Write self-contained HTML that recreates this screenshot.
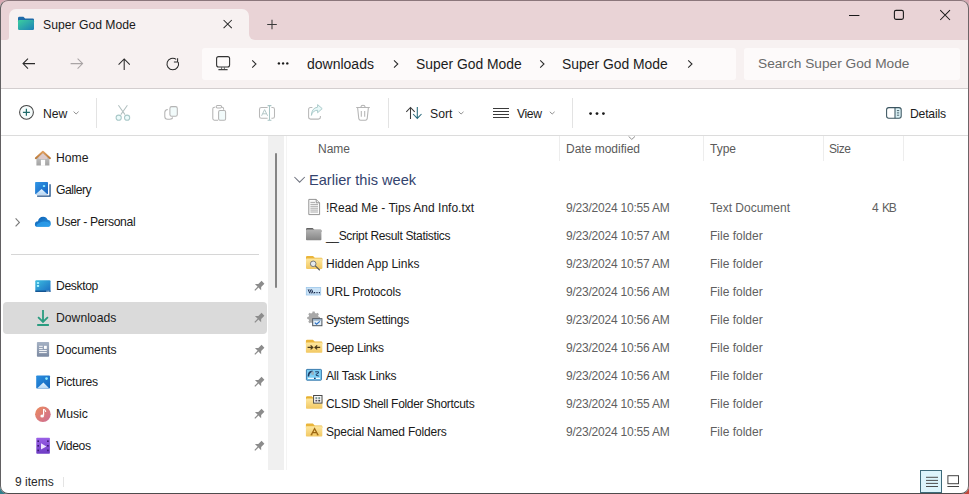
<!DOCTYPE html>
<html><head><meta charset="utf-8">
<style>
*{margin:0;padding:0;box-sizing:border-box}
html,body{width:969px;height:494px;overflow:hidden;background:#d8a9b3}
body{font-family:"Liberation Sans",sans-serif;color:#1c1c1c;position:relative}
.a{position:absolute}
.t{position:absolute;white-space:nowrap;line-height:16px}
#win{position:absolute;left:0;top:0;width:969px;height:494px;border-radius:8px;overflow:hidden;background:#fff}
#frame{position:absolute;left:0;top:0;width:969px;height:494px;border:1px solid #5e585b;border-top-color:#8b767b;border-left-color:#626062;border-bottom-color:#4e4c4d;border-right-color:#6e6467;border-radius:8px}
#ov{position:absolute;left:0;top:0}
.cm{font-size:12.2px;color:#1c1c1c}
.nav{font-size:12.2px;color:#1a1a1a}
.hd{font-size:12px;color:#5a5a5a}
.st{font-size:12px;color:#2a2a2a}
.rw{font-size:12px;color:#1a1a1a}
.rw.g{color:#5f5f5f}
.dt{letter-spacing:-0.22px}
</style></head><body>
<div class="a" style="left:0;top:430px;width:70px;height:64px;background:#2f7f8c"></div>
<div class="a" style="left:900px;top:430px;width:69px;height:64px;background:#c2483a"></div>
<div id="win">
 <!-- backgrounds -->
 <div class="a" style="left:0;top:0;width:969px;height:40px;background:#e9d3d6"></div>
 <div class="a" style="left:0;top:40px;width:969px;height:48px;background:#f7f1f1"></div>
 <div class="a" style="left:0;top:88px;width:969px;height:1px;background:#d3cecf"></div>
 <div class="a" style="left:9px;top:9px;width:240px;height:32px;background:#f7f1f1;border-radius:7px 7px 0 0"></div>
 <div class="a" style="left:249px;top:30px;width:8px;height:10px;background:#f7f1f1"></div>
 <div class="a" style="left:249px;top:24px;width:10px;height:16px;background:#e9d3d6;border-radius:0 0 0 6px"></div>
 <div class="a" style="left:2px;top:30px;width:7px;height:10px;background:#f7f1f1"></div>
 <div class="a" style="left:0;top:24px;width:9px;height:16px;background:#e9d3d6;border-radius:0 0 3px 0"></div>
 <div class="a" style="left:202px;top:48px;width:534px;height:32px;background:#fdfafa;border-radius:3px"></div>
 <div class="a" style="left:744px;top:48px;width:216px;height:32px;background:#fdfafa;border-radius:3px"></div>
 <div class="a" style="left:0;top:135px;width:969px;height:1px;background:#dcdcdc"></div>
 <div class="a" style="left:268px;top:136px;width:16px;height:334px;background:#f0f0f0"></div>
 <div class="a" style="left:275px;top:153px;width:2px;height:135px;background:#858585;border-radius:1px"></div>
 <div class="a" style="left:286px;top:136px;width:1px;height:334px;background:#f4f4f4"></div>
 <div class="a" style="left:3px;top:302px;width:264px;height:32px;background:#dadada;border-radius:4px"></div>
 <div class="a" style="left:11px;top:254px;width:248px;height:1px;background:#d6d6d6"></div>
 <div class="a" style="left:96px;top:98px;width:1px;height:30px;background:#e3e3e3"></div>
 <div class="a" style="left:388px;top:98px;width:1px;height:30px;background:#e3e3e3"></div>
 <div class="a" style="left:572px;top:98px;width:1px;height:30px;background:#e3e3e3"></div>
 <div class="a" style="left:559px;top:136px;width:1px;height:25px;background:#ededed"></div>
 <div class="a" style="left:703px;top:136px;width:1px;height:25px;background:#ededed"></div>
 <div class="a" style="left:823px;top:136px;width:1px;height:25px;background:#ededed"></div>
 <div class="a" style="left:903px;top:136px;width:1px;height:25px;background:#ededed"></div>
 <div class="a" style="left:63px;top:477px;width:1px;height:10px;background:#e4e4e4"></div>
 <div class="a" style="left:920px;top:470px;width:22px;height:23px;background:#dcf4fb;border:1px solid #3d6a7a"></div>

 <!-- texts -->
 <div class="t" style="left:43px;top:17px;font-size:12.2px;color:#1a1a1a">Super God Mode</div>
 <div class="t" style="left:307px;top:56px;font-size:14px">downloads</div>
 <div class="t" style="left:416px;top:56px;font-size:13.9px">Super God Mode</div>
 <div class="t" style="left:562px;top:56px;font-size:13.9px">Super God Mode</div>
 <div class="t" style="left:758px;top:56px;font-size:13.7px;color:#6a6a6a">Search Super God Mode</div>
 <div class="t cm" style="left:43px;top:106px">New</div>
 <div class="t cm" style="left:430px;top:106px">Sort</div>
 <div class="t cm" style="left:517px;top:106px;letter-spacing:-0.4px">View</div>
 <div class="t cm" style="left:910px;top:106px;letter-spacing:-0.2px">Details</div>
 <div class="t nav" style="left:56px;top:150px">Home</div>
 <div class="t nav" style="left:56px;top:182px;letter-spacing:-0.5px">Gallery</div>
 <div class="t nav" style="left:56px;top:214px;letter-spacing:-0.36px">User - Personal</div>
 <div class="t nav" style="left:56px;top:278px;letter-spacing:-0.4px">Desktop</div>
 <div class="t nav" style="left:56px;top:310px">Downloads</div>
 <div class="t nav" style="left:56px;top:342px;letter-spacing:-0.12px">Documents</div>
 <div class="t nav" style="left:56px;top:374px;letter-spacing:-0.29px">Pictures</div>
 <div class="t nav" style="left:56px;top:406px">Music</div>
 <div class="t nav" style="left:56px;top:438px;letter-spacing:-0.4px">Videos</div>
 <div class="t hd" style="left:318px;top:141px">Name</div>
 <div class="t hd" style="left:566px;top:141px">Date modified</div>
 <div class="t hd" style="left:710px;top:141px">Type</div>
 <div class="t hd" style="left:829px;top:141px;letter-spacing:-0.5px">Size</div>
 <div class="t" style="left:309px;top:172px;font-size:14.6px;color:#34446e">Earlier this week</div>

 <div class="t rw" style="left:326px;top:200px">!Read Me - Tips And Info.txt</div>
 <div class="t rw g dt" style="left:566px;top:200px">9/23/2024 10:55 AM</div>
 <div class="t rw g" style="left:710px;top:200px">Text Document</div>
 <div class="t rw g" style="left:872px;top:200px">4</div><div class="t rw g" style="left:882px;top:200px;letter-spacing:-1.3px;font-size:12px">KB</div>
 <div class="t rw" style="left:326px;top:228px;letter-spacing:-0.33px">__Script Result Statistics</div>
 <div class="t rw g dt" style="left:566px;top:228px">9/23/2024 10:57 AM</div>
 <div class="t rw g" style="left:710px;top:228px">File folder</div>
 <div class="t rw" style="left:326px;top:256px">Hidden App Links</div>
 <div class="t rw g dt" style="left:566px;top:256px">9/23/2024 10:57 AM</div>
 <div class="t rw g" style="left:710px;top:256px">File folder</div>
 <div class="t rw" style="left:326px;top:284px;letter-spacing:-0.17px">URL Protocols</div>
 <div class="t rw g dt" style="left:566px;top:284px">9/23/2024 10:56 AM</div>
 <div class="t rw g" style="left:710px;top:284px">File folder</div>
 <div class="t rw" style="left:326px;top:312px;letter-spacing:-0.25px">System Settings</div>
 <div class="t rw g dt" style="left:566px;top:312px">9/23/2024 10:56 AM</div>
 <div class="t rw g" style="left:710px;top:312px">File folder</div>
 <div class="t rw" style="left:326px;top:340px;letter-spacing:-0.22px">Deep Links</div>
 <div class="t rw g dt" style="left:566px;top:340px">9/23/2024 10:56 AM</div>
 <div class="t rw g" style="left:710px;top:340px">File folder</div>
 <div class="t rw" style="left:326px;top:368px;letter-spacing:-0.15px">All Task Links</div>
 <div class="t rw g dt" style="left:566px;top:368px">9/23/2024 10:56 AM</div>
 <div class="t rw g" style="left:710px;top:368px">File folder</div>
 <div class="t rw" style="left:326px;top:396px;letter-spacing:-0.3px">CLSID Shell Folder Shortcuts</div>
 <div class="t rw g dt" style="left:566px;top:396px">9/23/2024 10:55 AM</div>
 <div class="t rw g" style="left:710px;top:396px">File folder</div>
 <div class="t rw" style="left:326px;top:424px;letter-spacing:-0.2px">Special Named Folders</div>
 <div class="t rw g dt" style="left:566px;top:424px">9/23/2024 10:55 AM</div>
 <div class="t rw g" style="left:710px;top:424px">File folder</div>
 <div class="t st" style="left:15px;top:474px">9 items</div>

 <!-- icons overlay -->
 <svg id="ov" width="969" height="494" viewBox="0 0 969 494">
  <defs>
  <linearGradient id="tf" x1="0" y1="0" x2="1" y2="1"><stop offset="0" stop-color="#3ccf9e"/><stop offset="1" stop-color="#1d80b8"/></linearGradient>
 </defs>
 <g fill="none" stroke-linecap="butt">
 <!-- tab folder -->
 <path d="M18 18.2 Q18 16.8 19.4 16.8 H23.4 L25.2 18.4 H32.8 Q34 18.4 34 19.6 V21 H18 Z" fill="#1f6aa8"/>
 <rect x="18" y="20" width="16" height="10" rx="1.2" fill="url(#tf)"/>
 <!-- tab close & plus -->
 <path d="M223.6 20 L231.8 28.2 M231.8 20 L223.6 28.2" stroke="#2a2a2a" stroke-width="1.05"/>
 <path d="M272 19.8 V29.3 M267.2 24.5 H276.8" stroke="#3a3a3a" stroke-width="1.05"/>
 <!-- window controls -->
 <path d="M849 15.5 H859.4" stroke="#1a1a1a" stroke-width="1.05"/>
 <rect x="894.4" y="10.4" width="9" height="9" rx="1.6" stroke="#1a1a1a" stroke-width="1.1"/>
 <path d="M940.2 10.2 L950 20 M950 10.2 L940.2 20" stroke="#1a1a1a" stroke-width="1.05"/>
 <!-- nav arrows -->
 <path d="M35 63.6 H23 M28 58.6 L23 63.6 L28 68.6" stroke="#2a2a2a" stroke-width="1.05"/>
 <path d="M70.6 63.6 H82.6 M77.6 58.6 L82.6 63.6 L77.6 68.6" stroke="#a9a4a5" stroke-width="1.05"/>
 <path d="M124.2 70 V59 M118.6 64.6 L124.2 59 L129.8 64.6" stroke="#2a2a2a" stroke-width="1.05"/>
 <path d="M176.2 59.3 A5.8 5.8 0 1 0 178.3 62.2" stroke="#2a2a2a" stroke-width="1.05"/>
 <path d="M177.6 58.2 V62 H173.9" stroke="#2a2a2a" stroke-width="1.05"/>
 <!-- PC -->
 <rect x="216.6" y="56.6" width="13" height="10.4" rx="2" stroke="#333" stroke-width="1.1"/>
 <path d="M218.4 69.6 H227.6" stroke="#444" stroke-width="1.3"/><path d="M221.6 67.2 V69 M224.4 67.2 V69" stroke="#555" stroke-width="0.9"/>
 <!-- breadcrumbs chevrons -->
 <path d="M252.2 60.4 L256 64 L252.2 67.6" stroke="#2a2a2a" stroke-width="1.05"/>
 <circle cx="278.9" cy="63.4" r="1.2" fill="#1a1a1a"/><circle cx="283.1" cy="63.4" r="1.2" fill="#1a1a1a"/><circle cx="287.3" cy="63.4" r="1.2" fill="#1a1a1a"/>
 <path d="M394 60.4 L397.8 64 L394 67.6" stroke="#2a2a2a" stroke-width="1.05"/>
 <path d="M540.2 60.4 L544 64 L540.2 67.6" stroke="#2a2a2a" stroke-width="1.05"/>
 <path d="M688.2 60.4 L692 64 L688.2 67.6" stroke="#2a2a2a" stroke-width="1.05"/>
 <!-- command bar -->
 <circle cx="26.5" cy="112.3" r="6.9" fill="#f6fcfc" stroke="#444" stroke-width="1.05"/>
 <path d="M26.4 108.8 V115.8 M22.9 112.3 H29.9" stroke="#1f6b6a" stroke-width="1.25"/>
 <path d="M73.6 111.6 L76.1 114 L78.6 111.6" stroke="#8a8a8a" stroke-width="0.95"/>
 <!-- cut -->
 <path d="M118.4 105.2 L125 114.6 M127.4 105.2 L120.8 114.6" stroke="#b2c0c0" stroke-width="1.05"/>
 <circle cx="118.7" cy="117.7" r="2.6" fill="#ecfbfb" stroke="#a9c8c8" stroke-width="1.05"/>
 <circle cx="127.1" cy="117.7" r="2.6" fill="#ecfbfb" stroke="#a9c8c8" stroke-width="1.05"/>
 <!-- copy -->
 <rect x="169.9" y="106.6" width="7.4" height="9.6" rx="1.8" fill="#f2fbfb" stroke="#b4b4b4" stroke-width="1.05"/>
 <path d="M167.8 109.4 Q164.8 109.6 164.8 112.4 V116.4 Q164.8 119.2 167.6 119.2 H169.8 Q172.4 119.2 172.6 117.4" stroke="#b4b4b4" stroke-width="1.05"/>
 <!-- paste -->
 <path d="M215.2 107.2 H214.4 Q212.8 107.2 212.8 108.8 V118.6 Q212.8 120.2 214.4 120.2 H218" stroke="#b4b4b4" stroke-width="1.05"/>
 <path d="M221.8 107.2 H222 Q223.6 107.2 223.6 108.8 V109.8" stroke="#b4b4b4" stroke-width="1.05"/>
 <rect x="216.2" y="105.4" width="5.4" height="2.6" rx="1.2" stroke="#b4b4b4" stroke-width="1.05"/>
 <rect x="218.6" y="110.5" width="7" height="9.7" rx="1.4" fill="#f2fbfb" stroke="#b4b4b4" stroke-width="1.05"/>
 <!-- rename -->
 <path d="M267.6 107.4 H261.4 Q259.5 107.4 259.5 109.3 V116.4 Q259.5 118.3 261.4 118.3 H267.6 M271.4 107.4 H272.6 Q274.5 107.4 274.5 109.3 V116.4 Q274.5 118.3 272.6 118.3 H271.4" stroke="#b8b8b8" stroke-width="1.05"/>
 <path d="M269.5 105.6 V120.2 M267.6 105.6 H271.4 M267.6 120.2 H271.4" stroke="#a7c4c4" stroke-width="1.05"/>
 <path d="M261.6 115.8 L264.6 109.6 L267.6 115.8 M262.6 113.8 H266.6" stroke="#b5c8c8" stroke-width="1"/>
 <!-- share -->
 <path d="M312.4 107.4 H310.6 Q308.6 107.4 308.6 109.4 V117.1 Q308.6 119.1 310.6 119.1 H318.4 Q320.4 119.1 320.4 117.1 V116" stroke="#b8b8b8" stroke-width="1.05"/>
 <path d="M311.4 115.4 Q312.4 110.6 317.6 110.2 V112.8 L322.2 108.6 L317.6 104.6 V107.2 Q311.6 108 311.4 115.4 Z" fill="#e8f8f8" stroke="#a8c8c8" stroke-width="0.95" stroke-linejoin="round"/>
 <!-- delete -->
 <path d="M356.2 107.4 H369.8 M360.8 107.2 Q361 105.2 363 105.2 Q365 105.2 365.2 107.2 M357.6 107.6 L358.8 118.6 Q359 120.2 360.6 120.2 H365.4 Q367 120.2 367.2 118.6 L368.4 107.6 M361.3 111 V116.8 M364.7 111 V116.8" stroke="#b5b5b5" stroke-width="1.05"/>
 <!-- sort -->
 <path d="M410.5 118.9 V107.4 M406.3 111.8 L410.5 107.4 L414.7 111.8" stroke="#3c3c3c" stroke-width="1.05"/>
 <path d="M417.3 106.9 V118.4 M413.1 114 L417.3 118.4 L421.5 114" stroke="#2a6b7c" stroke-width="1.05"/>
 <path d="M458.7 111.8 L461.1 114 L463.5 111.8" stroke="#8a8a8a" stroke-width="0.95"/>
 <!-- view -->
 <path d="M493 108.5 H509 M493 111.5 H509 M493 114.5 H509 M493 117.5 H509" stroke="#3a3a3a" stroke-width="1.05"/>
 <path d="M549.8 111.8 L552.2 114 L554.6 111.8" stroke="#8a8a8a" stroke-width="0.95"/>
 <circle cx="590.6" cy="113.6" r="1.4" fill="#1a1a1a"/><circle cx="597" cy="113.6" r="1.4" fill="#1a1a1a"/><circle cx="603.4" cy="113.6" r="1.4" fill="#1a1a1a"/>
 <!-- details -->
 <path d="M895 107.6 H899.4 Q901.2 107.6 901.2 109.4 V116.4 Q901.2 118.2 899.4 118.2 H895 Z" fill="#dcf2f6"/>
 <rect x="886.6" y="107.6" width="14.6" height="10.6" rx="2.2" stroke="#3b5560" stroke-width="1.05"/>
 <path d="M895 107.6 V118.2" stroke="#3b5560" stroke-width="1.05"/>
 <path d="M896.9 110.6 H899.2 M896.9 112.9 H899.2 M896.9 115.2 H899.2" stroke="#3b5560" stroke-width="0.9"/>
 </g>
 <defs>
  <linearGradient id="hb" x1="0" y1="0" x2="0" y2="1"><stop offset="0" stop-color="#cfcfcf"/><stop offset="1" stop-color="#a2a2a2"/></linearGradient>
  <linearGradient id="hr" x1="0" y1="0" x2="0" y2="1"><stop offset="0" stop-color="#e0a060"/><stop offset="1" stop-color="#b87838"/></linearGradient>
  <linearGradient id="gl" x1="0" y1="0" x2="1" y2="1"><stop offset="0" stop-color="#2f96e6"/><stop offset="1" stop-color="#1762c0"/></linearGradient>
  <linearGradient id="gw" x1="0" y1="0" x2="0" y2="1"><stop offset="0" stop-color="#e8f4ff"/><stop offset="1" stop-color="#b8d8f4"/></linearGradient>
  <linearGradient id="od" x1="0" y1="0" x2="1" y2="1"><stop offset="0" stop-color="#0c5cb0"/><stop offset="1" stop-color="#2a9ae6"/></linearGradient>
  <linearGradient id="dk" x1="0" y1="0" x2="1" y2="1"><stop offset="0" stop-color="#3cbde0"/><stop offset="1" stop-color="#1a6cc2"/></linearGradient>
  <linearGradient id="dc" x1="0" y1="0" x2="0" y2="1"><stop offset="0" stop-color="#a6b2c4"/><stop offset="1" stop-color="#7c8aa2"/></linearGradient>
  <linearGradient id="pc" x1="0" y1="0" x2="1" y2="1"><stop offset="0" stop-color="#2a8fe0"/><stop offset="1" stop-color="#1464bc"/></linearGradient>
  <linearGradient id="mu" x1="0" y1="0" x2="1" y2="1"><stop offset="0" stop-color="#ec8c5c"/><stop offset="1" stop-color="#cc6c96"/></linearGradient>
  <linearGradient id="vd" x1="0" y1="0" x2="0" y2="1"><stop offset="0" stop-color="#9a60e6"/><stop offset="1" stop-color="#6e3cc4"/></linearGradient>
  <g id="pin"><g transform="rotate(45)"><path d="M-2 -6.2 H2 V-1.6 L4.4 0.8 H-4.4 L-2 -1.6 Z" fill="#8c8c8c"/><path d="M0 0.6 V5.4" stroke="#8c8c8c" stroke-width="1.2"/></g></g>
 </defs>
 <!-- home -->
 <path d="M36.4 158.8 L42.9 152.6 L49.4 158.8 V165.6 H36.4 Z" fill="url(#hb)"/>
 <path d="M38.6 156.8 L42.9 152.8 L47.2 156.8 V159 H38.6 Z" fill="#dccaca"/>
 <rect x="40.9" y="159.8" width="4.2" height="6" fill="#fff"/>
 <path d="M35.8 158.2 L42.9 151.8 L50 158.2" fill="none" stroke="url(#hr)" stroke-width="1.9" stroke-linecap="round" stroke-linejoin="round"/>
 <!-- gallery -->
 <path d="M37.1 195.4 H49.4 V184.2 H50.7 V196.7 H37.1 Z" fill="#1f4f86"/>
 <rect x="35.1" y="182" width="12.9" height="12.3" rx="0.8" fill="url(#gl)"/>
 <path d="M35.6 194.3 L41.6 189 L47.4 194.3 Z" fill="url(#gw)"/>
 <rect x="42.9" y="185.1" width="2.2" height="1.9" fill="#86e6ff"/>
 <!-- onedrive -->
 <path d="M37.6 226.8 Q34.8 226.8 34.9 224.2 Q35 221.4 38 221.2 Q38.8 216.8 43.2 216.7 Q46.4 216.8 47.6 219.8 Q50.8 220.2 50.8 223.4 Q50.8 226.8 47.6 226.8 Z" fill="url(#od)"/>
 <path d="M38.2 226.8 Q36.4 226.6 36.6 225 Q40 221.2 44.6 221.4 Q48.4 221.6 50.6 224.4 Q50.2 226.8 47.6 226.8 Z" fill="#2ea0ec" opacity="0.75"/>
 <path d="M15.6 218.4 L19.4 222.4 L15.6 226.4" fill="none" stroke="#7a7a7a" stroke-width="1.15"/>
 <!-- desktop -->
 <rect x="35.3" y="280.3" width="15.2" height="11.6" rx="1" fill="url(#dk)"/>
 <rect x="35.3" y="290.6" width="15.2" height="1.3" fill="#15508c"/>
 <rect x="46.6" y="290.6" width="0.9" height="1.3" fill="#e6f4fb"/><rect x="48.4" y="290.6" width="0.9" height="1.3" fill="#e6f4fb"/>
 <rect x="36.9" y="282.1" width="2.2" height="1.8" fill="#a8f4ff"/><rect x="36.9" y="285" width="2.2" height="1.9" fill="#a8f4ff"/>
 <!-- downloads -->
 <path d="M43 310 V322 M38.1 317.1 L43 322 L47.9 317.1" fill="none" stroke="#2a9c80" stroke-width="1.8"/>
 <path d="M37.2 325 H48.9" stroke="#2a9c80" stroke-width="1.8"/>
 <!-- documents -->
 <rect x="36.9" y="342" width="12.2" height="14.7" rx="0.8" fill="url(#dc)"/>
 <path d="M39.1 346.3 H42.7 M39.1 348.6 H42.7 M39.1 350.6 H46.8 M39.1 352.6 H46.8" stroke="#fff" stroke-width="0.95"/>
 <rect x="44" y="345.8" width="2.8" height="3.1" fill="#fff"/>
 <!-- pictures -->
 <rect x="36.2" y="375.5" width="13.8" height="13.1" rx="0.8" fill="url(#pc)"/>
 <path d="M37.2 388.2 L43.4 382.4 L49.1 388.2 Z" fill="url(#gw)"/>
 <circle cx="46.5" cy="378.6" r="1.3" fill="#8ff0ff"/>
 <!-- music -->
 <circle cx="42.9" cy="414.3" r="7.8" fill="url(#mu)"/>
 <path d="M43.6 409 V415.4" stroke="#fff" stroke-width="1.2"/>
 <path d="M43.6 409.2 Q45.6 409.8 45.8 412" fill="none" stroke="#fff" stroke-width="1.1"/>
 <ellipse cx="42.2" cy="416.1" rx="1.8" ry="1.5" fill="#fff"/>
 <!-- videos -->
 <rect x="36.3" y="437.8" width="13.6" height="15.9" rx="0.8" fill="url(#vd)"/>
 <rect x="37.4" y="440.4" width="1.6" height="1.6" fill="#3a1a6e"/><rect x="37.4" y="445" width="1.6" height="1.6" fill="#3a1a6e"/><rect x="37.4" y="449.6" width="1.6" height="1.6" fill="#3a1a6e"/>
 <rect x="47.1" y="440.4" width="1.6" height="1.6" fill="#3a1a6e"/><rect x="47.1" y="445" width="1.6" height="1.6" fill="#3a1a6e"/><rect x="47.1" y="449.6" width="1.6" height="1.6" fill="#3a1a6e"/>
 <path d="M41 443.2 L46.4 446.4 L41 449.6 Z" fill="#efe4ff"/>
 <!-- pins -->
 <use href="#pin" x="258.6" y="286.6"/>
 <use href="#pin" x="258.6" y="318.6"/>
 <use href="#pin" x="258.6" y="350.6"/>
 <use href="#pin" x="258.6" y="382.6"/>
 <use href="#pin" x="258.6" y="414.6"/>
 <use href="#pin" x="258.6" y="446.6"/>
 <defs>
  <linearGradient id="gf" x1="0" y1="0" x2="0" y2="1"><stop offset="0" stop-color="#b4b4b4"/><stop offset="1" stop-color="#858585"/></linearGradient>
  <linearGradient id="yf" x1="0" y1="0" x2="0" y2="1"><stop offset="0" stop-color="#fde7a0"/><stop offset="1" stop-color="#f2c862"/></linearGradient>
  <g id="yfold"><path d="M0 1.2 Q0 0 1.2 0 H7 L8.8 1.8 H15.4 Q16.4 1.8 16.4 2.8 V4.5 H0 Z" fill="#eab53a"/><rect x="0" y="2.6" width="16.4" height="10.4" rx="0.8" fill="url(#yf)"/></g>
 </defs>
 <!-- txt -->
 <path d="M308.8 199.4 H316.2 L319.6 202.8 V214.6 H308.8 Z" fill="#fcfcfc" stroke="#8e8e8e" stroke-width="0.95"/>
 <path d="M316.2 199.4 V202.8 H319.6" fill="#ececec" stroke="#8e8e8e" stroke-width="0.95"/>
 <path d="M310.4 202.4 H315 M310.4 204.4 H318 M310.4 206.3 H318 M310.4 208.2 H318 M310.4 210.1 H318 M310.4 212 H318" stroke="#a0a0a0" stroke-width="0.9"/>
 <!-- gray folder -->
 <path d="M306 229.2 Q306 228 307.2 228 H312.6 L314.4 229.8 H320.4 Q321.4 229.8 321.4 230.8 V232 H306 Z" fill="#636363"/>
 <rect x="306" y="229.5" width="15.4" height="10.7" rx="0.8" fill="url(#gf)"/>
 <!-- hidden app links -->
 <use href="#yfold" x="306" y="255.9"/>
 <circle cx="313.2" cy="263.8" r="2.8" fill="#e4eaee" stroke="#7a7a7a" stroke-width="1"/>
 <path d="M315.3 265.9 L319.8 270.2" stroke="#5a5a5a" stroke-width="1.2"/>
 <!-- url protocols -->
 <rect x="306.3" y="287.4" width="14.4" height="7.6" fill="#c9e2f6" stroke="#9cc6ea" stroke-width="0.8"/>
 <path d="M308.2 289.4 L309.8 293.4 M309.9 289.4 L311.5 293.4 M311.6 289.4 L313.2 293.4" stroke="#16264a" stroke-width="1"/>
 <path d="M314 292.6 H315.2 M316.4 292.6 H317.6 M318.8 292.6 H320" stroke="#16264a" stroke-width="1.1"/>
 <!-- system settings -->
 <g transform="translate(313.6 318)"><path d="M-1.2 -6 H1.2 L1.6 -4.3 L3.1 -3.6 L4.6 -4.6 L6.2 -3 L5.2 -1.5 L5.8 0 L7.4 0.4 V2.6 L5.8 3 L5.2 4.5 L6.2 6 L4.6 7.6 L3.1 6.6 L1.6 7.3 L1.2 9 H-1.2 L-1.6 7.3 L-3.1 6.6 L-4.6 7.6 L-6.2 6 L-5.2 4.5 L-5.8 3 L-7.4 2.6 V0.4 L-5.8 0 L-5.2 -1.5 L-6.2 -3 L-4.6 -4.6 L-3.1 -3.6 L-1.6 -4.3 Z" fill="#a8a8a8" transform="scale(0.86) translate(0 -1.5)"/></g>
 <rect x="312.7" y="318.7" width="9.2" height="7" fill="#e6f0f8" stroke="#4c545c" stroke-width="1"/>
 <rect x="313.2" y="319.2" width="8.2" height="1.4" fill="#8aa4bc"/>
 <path d="M314.8 322.6 L316.6 324.2 L319.8 321.4" fill="none" stroke="#2a70c4" stroke-width="1.2"/>
 <!-- deep links -->
 <use href="#yfold" x="305.9" y="339.8"/>
 <path d="M307.6 347.4 H312.6 M310.6 345.4 L312.8 347.4 L310.6 349.4 M320.2 347.4 H315.2 M317.2 345.4 L315 347.4 L317.2 349.4" fill="none" stroke="#4a3a1c" stroke-width="1.25"/>
 <!-- all task links -->
 <rect x="306.4" y="369.4" width="15" height="10.8" rx="0.6" fill="#7ccff4" stroke="#3a7cae" stroke-width="1"/>
 <path d="M308.4 376.6 Q308.4 371.6 312.6 371.4" fill="none" stroke="#1e3c64" stroke-width="1.6"/>
 <rect x="311.4" y="371.6" width="2.6" height="3.2" fill="#9ab0bc"/>
 <path d="M315.2 371.8 H318.6 M318.4 371.8 Q319.6 373.2 316 374.4 Q315 375.6 318.8 376" fill="none" stroke="#1e3c64" stroke-width="1"/>
 <path d="M308 378.4 H314 M315.6 378.4 H320" stroke="#f4fbff" stroke-width="1.1"/>
 <path d="M314 378.4 H315.6" stroke="#1e3c64" stroke-width="1.1"/>
 <!-- clsid -->
 <path d="M306 397.4 Q306 396.2 307.2 396.2 H311.6 L313.2 397.8 H314 V400 H306 Z" fill="#e6b030"/>
 <rect x="306" y="398.6" width="16.4" height="10.1" rx="0.8" fill="url(#yf)"/>
 <rect x="313.6" y="395.5" width="8.4" height="7.6" fill="#fcfcfc" stroke="#4a4a4a" stroke-width="1"/>
 <rect x="315.4" y="397.2" width="1.9" height="1.7" fill="#6a8a8a"/><rect x="318.3" y="397.2" width="1.9" height="1.7" fill="#6a8a8a"/>
 <rect x="315.4" y="399.8" width="1.9" height="1.7" fill="#5a4a5a"/><rect x="318.3" y="399.8" width="1.9" height="1.7" fill="#3a3a3a"/>
 <!-- special named -->
 <use href="#yfold" x="305.9" y="423.6"/>
 <path d="M311.4 434.6 L314.6 428.6 L317.8 434.6 M312.6 432.6 H316.6" fill="none" stroke="#9c6612" stroke-width="1.2"/>
 <path d="M310.6 434.8 H312.4 M316.8 434.8 H318.6" stroke="#9c6612" stroke-width="1"/>
 <!-- header chevrons -->
 <path d="M628.6 136.4 L631.8 139.4 L635 136.4" fill="none" stroke="#8a8a8a" stroke-width="0.95"/>
 <path d="M294.4 177 L299.6 182.2 L304.8 177" fill="none" stroke="#707480" stroke-width="1.05"/>
 <!-- status bar view buttons -->
 <path d="M926 477.3 H938 M926 480.4 H938 M926 483.4 H938 M926 486.5 H938" stroke="#444" stroke-width="0.95"/>
 <rect x="947.9" y="475.7" width="10.6" height="8" fill="none" stroke="#444" stroke-width="1"/>
 <path d="M947.4 486.5 H959" stroke="#444" stroke-width="1"/>
<!--ICONS-->
 </svg>
</div>
<div id="frame"></div>
</body></html>
